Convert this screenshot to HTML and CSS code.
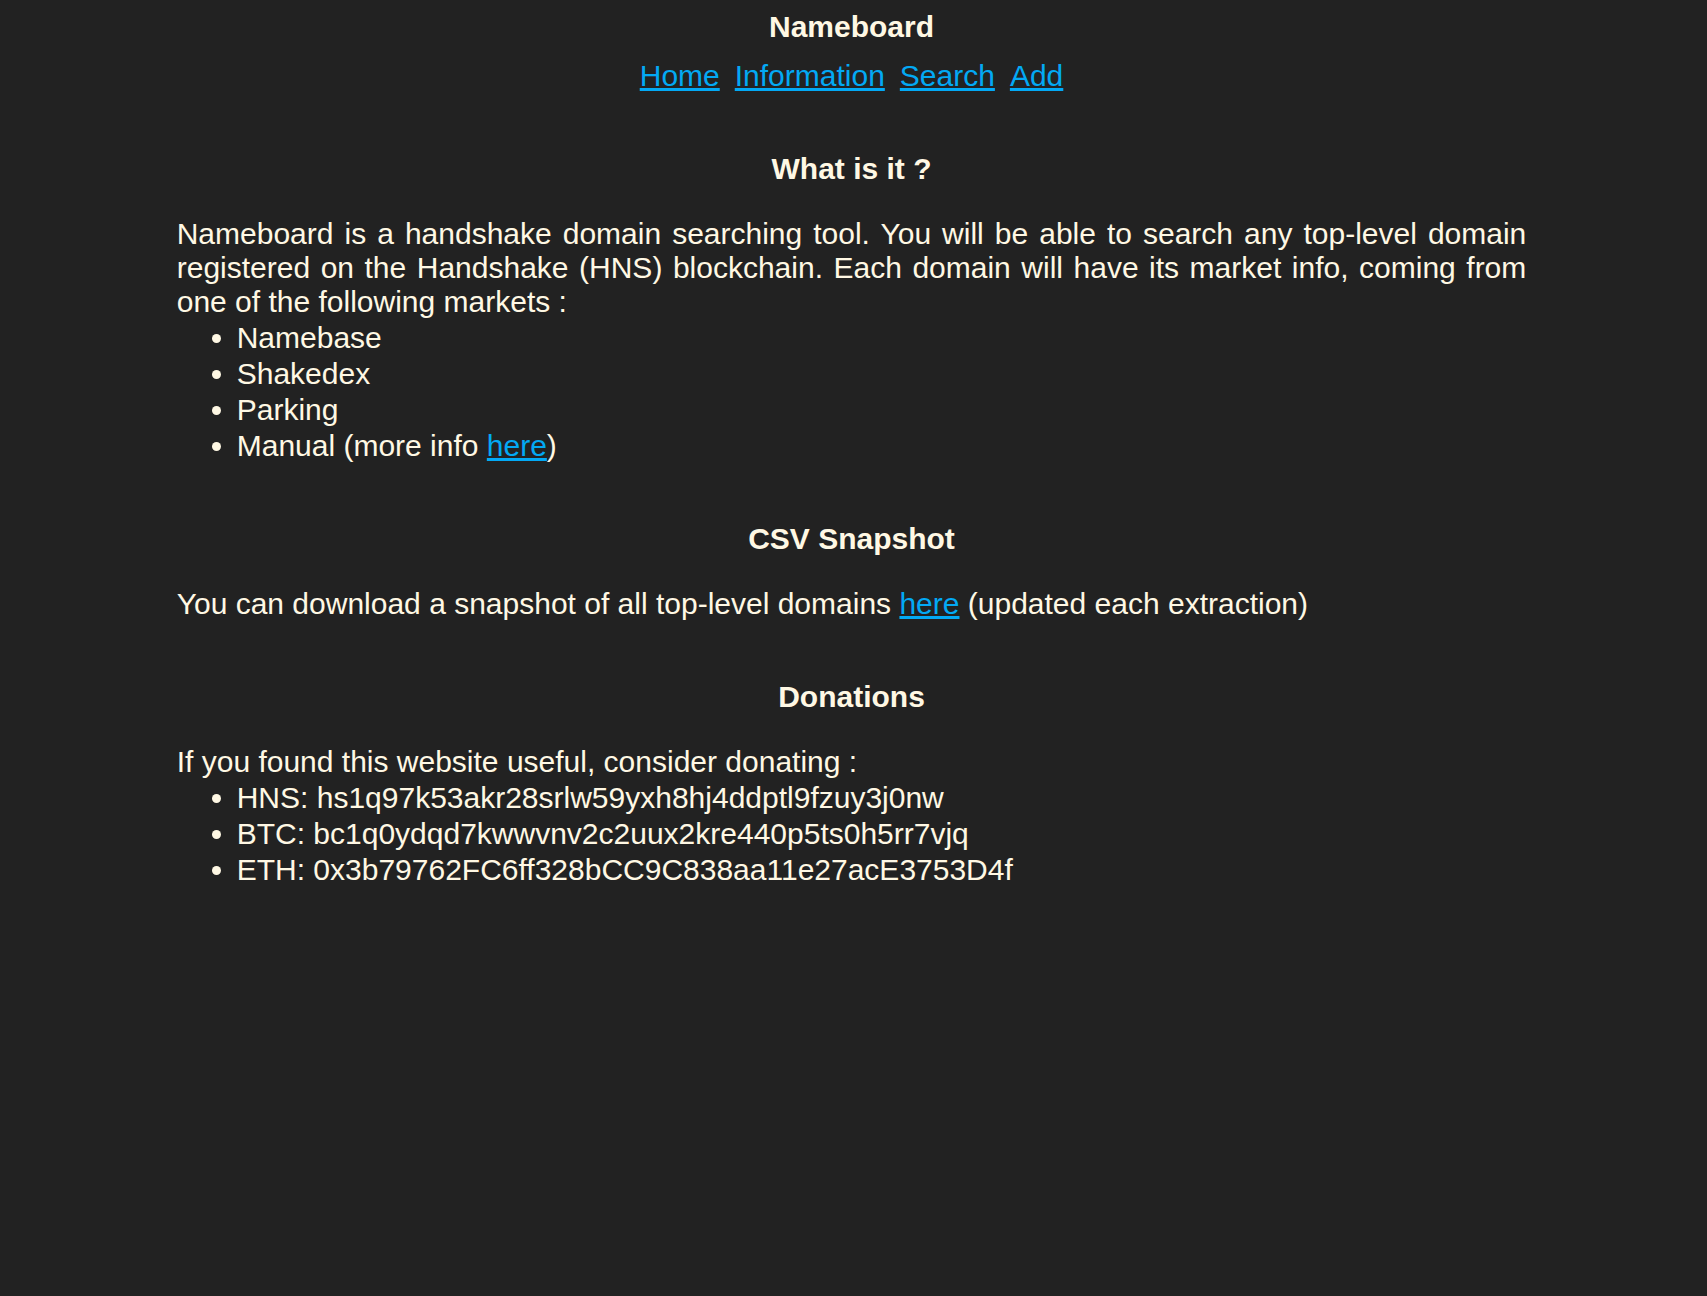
FILE: index.html
```html
<!DOCTYPE html>
<html lang="en">
<head>
<meta charset="utf-8">
<title>Nameboard - Information</title>
<link rel="stylesheet" href="styles.css">
</head>
<body>
<header class="site-header">
  <div class="site-title">Nameboard</div>
  <nav class="site-nav">
    <a href="#">Home</a>
    <a href="#">Information</a>
    <a href="#">Search</a>
    <a href="#">Add</a>
  </nav>
</header>
<main class="content">
  <section class="block">
    <h2 class="block-title">What is it ?</h2>
    <p class="text justified">Nameboard is a handshake domain searching tool. You will be able to search any top-level domain registered on the Handshake (HNS) blockchain. Each domain will have its market info, coming from one of the following markets :</p>
    <ul class="list">
      <li>Namebase</li>
      <li>Shakedex</li>
      <li>Parking</li>
      <li>Manual (more info <a href="#">here</a>)</li>
    </ul>
  </section>
  <section class="block">
    <h2 class="block-title">CSV Snapshot</h2>
    <p class="text">You can download a snapshot of all top-level domains <a href="#">here</a> (updated each extraction)</p>
  </section>
  <section class="block">
    <h2 class="block-title">Donations</h2>
    <p class="text">If you found this website useful, consider donating :</p>
    <ul class="list">
      <li>HNS: hs1q97k53akr28srlw59yxh8hj4ddptl9fzuy3j0nw</li>
      <li>BTC: bc1q0ydqd7kwwvnv2c2uux2kre440p5ts0h5rr7vjq</li>
      <li>ETH: 0x3b79762FC6ff328bCC9C838aa11e27acE3753D4f</li>
    </ul>
  </section>
</main>
</body>
</html>
```
FILE: styles.css
```css
html, body {
  background: #222222;
}
body {
  margin: 8px 12px 8px 8px;
  color: #fff8e4;
  font-family: "Liberation Sans", Arial, sans-serif;
  font-size: 30px;
}
a {
  color: #03a9f4;
  text-decoration: underline;
}
.site-header {
  display: flex;
  flex-direction: column;
  align-items: center;
  gap: 15px;
  padding-top: 2px;
}
.site-title {
  font-weight: bold;
}
.site-nav {
  display: flex;
  gap: 15px;
}
.content {
  width: 80%;
  margin: 0 auto;
}
.block-title {
  font-size: 30px;
  font-weight: bold;
  text-align: center;
  margin: 59px 0 31px;
}
.text {
  margin: 0;
}
.justified {
  text-align: justify;
}
.list {
  margin: 0;
  padding-left: 60px;
}
.list li {
  line-height: 34px;
  padding-top: 2px;
}
```
